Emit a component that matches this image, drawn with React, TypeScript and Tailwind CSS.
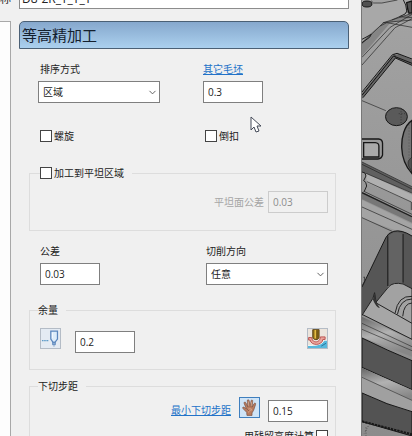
import React, { useState } from 'react';
import { ChevronDown } from 'lucide-react';
import { clsx } from 'clsx';

interface FieldProps {
  id: string;
  value: string;
  label?: string;
  disabled?: boolean;
}

function NumberField({ id, value, label, disabled }: FieldProps) {
  const [text, setText] = useState(value);

  return (
    <input
      id={id}
      type="text"
      aria-label={label}
      value={text}
      disabled={disabled}
      onChange={(e) => setText(e.target.value)}
      className={clsx(
        'block h-[22px] w-[60px] shrink-0 border px-1 outline-none',
        disabled ? 'border-[#cccccc] bg-[#f0f0f0] text-[#8c8c8c]' : 'border-[#7f7f7f] bg-white text-[#222222]'
      )}
    />
  );
}

function SelectField({ id, options }: { id: string; options: string[] }) {
  return (
    <div className="relative w-[122px]">
      <select
        id={id}
        className="block h-[22px] w-full appearance-none border border-[#7f7f7f] bg-white pl-1 pr-5 outline-none"
      >
        {options.map((o) => (
          <option key={o}>{o}</option>
        ))}
      </select>
      <ChevronDown size={11} strokeWidth={2} className="pointer-events-none absolute right-0.5 top-1.5 text-[#555555]" />
    </div>
  );
}

function CheckField({ label }: { label: string }) {
  return (
    <label className="flex h-3 w-fit items-center gap-0.5">
      <input
        type="checkbox"
        className="h-3 w-3 shrink-0 appearance-none border border-[#444444] bg-white checked:bg-[#1f6fd0]"
      />
      {label}
    </label>
  );
}

function ToolStockIcon() {
  return (
    <svg viewBox="0 0 60 60" className="h-full w-full" fill="none">
      <path d="M3 37H25" stroke="#5d9bc8" strokeWidth="4" strokeDasharray="5 2" />
      <path d="M31 7H52V32L44 42H38L31 32Z" fill="#dcecfa" stroke="#5a86bd" strokeWidth="4" />
      <path d="M36 29V11" stroke="#f4faff" strokeWidth="3" />
      <path d="M37 42H45V50H37Z" fill="#8fb0d4" stroke="#5a86bd" strokeWidth="3" />
      <path d="M38 54H44" stroke="#88a7c9" strokeWidth="2" />
    </svg>
  );
}

function CutterIcon() {
  return (
    <svg viewBox="0 0 60 60" className="h-full w-full">
      <rect width="60" height="60" fill="#ece5dd" />
      <path d="M0 53C26 54 46 49 51 36H60V60H0Z" fill="#58b8dc" />
      <path d="M0 52C26 53 46 48 51 35H60" fill="none" stroke="#f4f8f8" strokeWidth="3" />
      <path d="M2 27H12C12 45 38 46 39 25H54V33H47C44 54 9 53 7 35H2Z" fill="#eba69d" stroke="#b9504e" strokeWidth="3" />
      <path d="M15 2H35V26C35 36 15 36 15 26Z" fill="#8d6c19" stroke="#5b4317" strokeWidth="3" />
      <path d="M23 3V30" stroke="#e4bd43" strokeWidth="5" />
      <path d="M29 5V30" stroke="#6b5015" strokeWidth="3" />
      <path d="M42 54L57 45" stroke="#26739c" strokeWidth="3" />
    </svg>
  );
}

function HandIcon() {
  return (
    <svg viewBox="0 0 60 60" className="h-full w-full">
      <path
        d="M22 55L21 45L10 34C6 30 10 27 14 30L20 34L13 17C12 12 17 11 19 16L25 28L23 9C23 4 28 4 29 9L32 27L35 9C36 4 41 6 40 11L38 29L44 18C47 14 51 17 49 21L43 39L38 47V55Z"
        fill="#b97d61"
        stroke="#744a3b"
        strokeWidth="2"
      />
      <path d="M24 37C29 32 34 33 38 37M27 46C28 41 32 38 37 38M26 11L28 26M37 12L35 26" fill="none" stroke="#e2b49b" strokeWidth="2" />
      <path d="M22 34L28 41" stroke="#744a3b" strokeWidth="2" />
    </svg>
  );
}

function IconButton({ label, active, children }: { label: string; active?: boolean; children: React.ReactNode }) {
  return (
    <button
      type="button"
      aria-label={label}
      className={clsx(
        'h-[21px] w-[21px] shrink-0 self-start border',
        active ? 'border-[#3f7fbe] bg-[#cfe4f7]' : 'border-[#b4bcc6] bg-[#e4ebf3]'
      )}
    >
      {children}
    </button>
  );
}

// Shaded wireframe of the part, seen behind the dialog
function ModelView() {
  return (
    <svg viewBox="65 0 151 1308" preserveAspectRatio="none" className="h-full w-full" fill="none">
      <defs>
        <linearGradient id="base" x1="0" y1="0" x2="0" y2="1">
          <stop offset="0" stopColor="#a3a3a3" />
          <stop offset="0.35" stopColor="#9a9a9a" />
          <stop offset="1" stopColor="#8c8c8c" />
        </linearGradient>
        <linearGradient id="rib" x1="0" y1="0" x2="0.3" y2="1">
          <stop offset="0" stopColor="#666666" />
          <stop offset="0.5" stopColor="#b2b2b2" />
          <stop offset="1" stopColor="#878787" />
        </linearGradient>
      </defs>
      <rect x="65" width="151" height="1308" fill="url(#base)" />

      {/* upper housing */}
      <path d="M65 0H92L98 8L130 10L175 0H216V42L130 70L65 130Z" fill="#a8a8a8" />
      <path d="M65 125L88 103L130 68L216 40V54L150 69L65 168Z" fill="#858585" />
      <g stroke="#202020" strokeWidth="2">
        <path d="M92 2L100 9H125L172 0M65 130L130 68L216 40M65 172L150 82L216 43M65 195L165 83L216 56M120 78L140 68L216 82M128 68L216 60M155 60L178 50L216 53" />
        <path d="M178 50L195 42L200 34M190 0L197 15L201 38M65 118L93 103L88 112L65 128" strokeWidth="3" />
      </g>
      <ellipse cx="80" cy="12" rx="15" ry="9" fill="#505050" stroke="#151515" strokeWidth="3" />
      <path d="M200 8L216 3V38L207 40L203 27Z" fill="#545454" stroke="#151515" strokeWidth="4" />

      {/* recessed plate */}
      <path d="M65 280L158 166L176 162L216 179V196L166 174L65 296Z" fill="#666666" />
      <path d="M65 276L157 164L171 160L216 177M65 286L160 168L216 190M68 293L166 174L216 196" stroke="#151515" strokeWidth="3" />
      <path d="M163 162L167 174M65 302L137 332" stroke="#252525" strokeWidth="2" />
      <ellipse cx="169" cy="350" rx="33" ry="27" fill="#5a5a5a" stroke="#171717" strokeWidth="3" />
      <path d="M183 326V373M176 341H195" stroke="#292929" strokeWidth="2" strokeDasharray="3 5" />
      <path d="M216 361C192 377 184 413 185 443C186 475 200 503 216 521Z" fill="#747474" stroke="#171717" strokeWidth="4" />
      <path d="M207 374V500" stroke="#333333" strokeWidth="2" strokeDasharray="2 7" />
      <path d="M216 472C204 480 202 487 206 499L216 516Z" fill="#505050" stroke="#222222" strokeWidth="2" />
      <path d="M65 417H115Q127 418 127 430V465Q124 476 113 477H65" stroke="#171717" strokeWidth="4" />
      <path d="M70 428H105Q116 429 116 438V471H70Z" fill="#aaaaaa" stroke="#171717" strokeWidth="4" />

      {/* slanted rails */}
      <path d="M65 486L216 561V578L65 516Z" fill="#606060" />
      <path d="M76 520L216 584V607L80 548Z" fill="#b0b0b0" />
      <path d="M65 575L216 649V668L65 598Z" fill="#777777" />
      <path d="M65 600L216 672V707L175 694L65 655Z" fill="#a4a4a4" />
      <g stroke="#202020" strokeWidth="2">
        <path d="M65 486L216 560M65 493L216 567M77 520L216 579M80 545L214 606V630M73 575L216 643M65 621L216 688M65 653L156 694" />
        <path d="M65 578L216 650" strokeWidth="4" />
        <path d="M65 516Q77 516 77 528L70 542Q78 544 79 558L71 576" strokeWidth="3" />
      </g>

      {/* pocket */}
      <path d="M65 862L137 713Q144 698 161 694Q184 688 216 708V866L184 850Q158 844 145 858L110 909L65 943Z" fill="#565656" />
      <path d="M143 711Q160 688 189 702V851L165 848L145 859Z" fill="#636363" />
      <path d="M65 861L137 713Q144 698 161 694Q184 688 216 708M143 709V858M189 702V848" stroke="#171717" strokeWidth="3" />
      <path d="M145 861Q158 845 189 852L216 866V972L120 925L107 907Z" fill="#a2a2a2" stroke="#222222" strokeWidth="3" />
      <path d="M216 889Q174 886 165 939M216 897Q180 897 172 943M216 909Q191 910 188 949" stroke="#252525" strokeWidth="3" />
      <path d="M65 946L98 895L103 878L108 909L216 970V1018L65 943Z" fill="#a6a6a6" stroke="#222222" strokeWidth="3" />
      <path d="M103 879L98 899Q108 923 119 924L108 907Z" fill="#333333" />
      <path d="M69 832L73 831L72 845L66 856" stroke="#202020" strokeWidth="2" />

      {/* lower ribs */}
      <path d="M65 950L216 1021V1070L65 1012Z" fill="url(#rib)" />
      <path d="M65 970L216 1040M65 988L216 1052" stroke="#303030" strokeWidth="2" />
      <path d="M65 1014Q145 1053 216 1082V1169L65 1102Z" fill="#555555" stroke="#171717" strokeWidth="3" />
      <path d="M65 1104L216 1170V1208L65 1134Z" fill="url(#rib)" />
      <path d="M65 1130L216 1200V1238L65 1178Z" fill="#a0a0a0" />
      <path d="M65 1132L216 1201" stroke="#333333" strokeWidth="2" />
      <path d="M65 1179Q140 1215 216 1235V1308L65 1265Z" fill="#535353" stroke="#171717" strokeWidth="3" />
      <path d="M65 1264L216 1303" stroke="#171717" strokeWidth="6" strokeDasharray="7 3" />
      <path d="M77 1282V1308M84 1278L72 1300" stroke="#333333" strokeWidth="2" strokeDasharray="3 5" />
    </svg>
  );
}

export default function App() {
  const [name, setName] = useState('D8-2R_T_T_T');
  const groupStyle = 'min-w-0 border border-[#dddddd]';

  return (
    <div className="flex h-screen overflow-hidden bg-[#f0f0f0] font-['Open_Sans','Noto_Sans_CJK_SC',sans-serif] text-[10px] leading-4 text-[#222222]">
      <main className="flex min-w-0 flex-1 flex-col">
        {/* Name row, scrolled partly out of the window */}
        <div className="flex h-[9px] shrink-0 items-end justify-end overflow-hidden pr-3">
          <label htmlFor="name" className="mr-2 w-[11px] shrink-0 whitespace-nowrap text-[11px] leading-5">
            称
          </label>
          <input
            id="name"
            value={name}
            onChange={(e) => setName(e.target.value)}
            className="block h-[22px] min-w-0 flex-1 border border-[#8c8c8c] bg-white px-0.5 text-xs outline-none"
          />
        </div>

        <div className="flex min-h-0 flex-1 pt-3">
          <aside className="w-[11px] shrink-0 border-r border-t border-[#a8a8a8] bg-[#fdfdfd]" />

          <form className="min-w-0 flex-1 pl-2 pr-3" onSubmit={(e) => e.preventDefault()}>
            <h1 className="h-7 rounded-t-[5px] border border-[#4b6075] bg-linear-to-b from-[#86a8cd] to-[#abd0ee] px-0.5 text-[15px] leading-[26px] text-[#14202e]">
              等高精加工
            </h1>

            <div className="pl-2.5 pr-[13px]">
              <div className="grid grid-cols-[165px_1fr] pl-[9px] pt-3">
                <div className="flex flex-col gap-1">
                  <label htmlFor="sort" className="px-0.5">排序方式</label>
                  <SelectField id="sort" options={['区域', '层']} />
                </div>
                <div className="flex flex-col gap-1">
                  <a href="#stock" className="w-fit text-[#2272c8] underline">其它毛坯</a>
                  <NumberField id="stock" label="其它毛坯" value="0.3" />
                </div>
              </div>

              <div className="relative mt-[27px] grid grid-cols-[165px_1fr] pl-[11px]">
                <CheckField label="螺旋" />
                <CheckField label="倒扣" />
                <svg viewBox="0 0 12 18" className="absolute -top-3.5 left-[221px] h-[18px] w-3">
                  <path d="M1 1V14L4 11L6 16L9 15L7 10H11Z" fill="#ffffff" stroke="#444a58" strokeWidth="1" />
                </svg>
              </div>

              <fieldset className={clsx(groupStyle, 'mt-[25px] pb-[17px] pr-[7px]')}>
                <legend className="ml-2.5 pr-2">
                  <CheckField label="加工到平坦区域" />
                </legend>
                <div className="flex items-center justify-end gap-1 pt-3">
                  <label htmlFor="flat" className="text-[#a6a6a6]">平坦面公差</label>
                  <NumberField id="flat" value="0.03" disabled />
                </div>
              </fieldset>

              <div className="mt-3 grid grid-cols-[166px_1fr] pl-[11px]">
                <div className="flex flex-col gap-1">
                  <label htmlFor="tolerance">公差</label>
                  <NumberField id="tolerance" value="0.03" />
                </div>
                <div className="flex flex-col gap-1">
                  <label htmlFor="direction">切削方向</label>
                  <SelectField id="direction" options={['任意', '顺铣', '逆铣']} />
                </div>
              </div>

              <fieldset className={clsx(groupStyle, 'mt-[17px] pb-4 pl-2.5 pr-[7px]')}>
                <legend className="-ml-0.5 pr-2">余量</legend>
                <div className="mt-2.5 flex h-[25px] items-end">
                  <IconButton label="刀具余量">
                    <ToolStockIcon />
                  </IconButton>
                  <div className="ml-3.5 flex-1">
                    <NumberField id="allowance" label="余量" value="0.2" />
                  </div>
                  <IconButton label="曲面余量">
                    <CutterIcon />
                  </IconButton>
                </div>
              </fieldset>

              <fieldset className={clsx(groupStyle, 'mt-2 pb-4 pl-2.5 pr-[7px]')}>
                <legend className="-ml-0.5 pr-2">下切步距</legend>
                <div className="mt-[3px] flex h-[25px] items-end justify-end gap-2">
                  <a href="#step" className="self-center text-[#2272c8] underline">最小下切步距</a>
                  <IconButton label="手动" active>
                    <HandIcon />
                  </IconButton>
                  <NumberField id="step" label="最小下切步距" value="0.15" />
                </div>
                <label className="mt-1.5 flex items-center justify-end gap-0.5">
                  用残留高度计算
                  <input type="checkbox" className="h-3 w-3 appearance-none border border-[#444444] bg-white" />
                </label>
              </fieldset>
            </div>
          </form>
        </div>
      </main>

      <section aria-label="模型" className="w-[51px] shrink-0 border-l border-[#777777] bg-[#8c8c8c]">
        <ModelView />
      </section>
    </div>
  );
}
